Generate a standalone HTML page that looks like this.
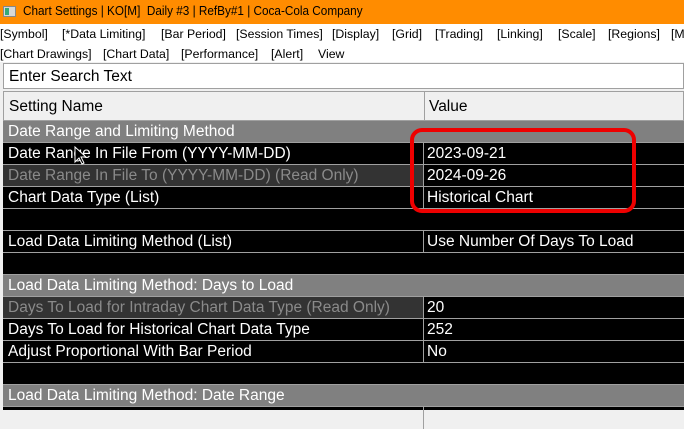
<!DOCTYPE html>
<html><head><meta charset="utf-8"><style>
*{margin:0;padding:0;box-sizing:border-box}
body{width:684px;height:410px;overflow:hidden;background:#f0f0f0;position:relative;font-family:"Liberation Sans",sans-serif}
.t{position:absolute;white-space:nowrap}
#title{position:absolute;left:0;top:0;width:684px;height:24px;background:#ff8c00}
#menu{position:absolute;left:0;top:24px;width:684px;height:38px;background:#fff}
.m{position:absolute;font-size:12.3px;color:#000;white-space:nowrap}
#search{position:absolute;left:3px;top:63px;width:681px;height:26px;background:#fff;border:1px solid #a0a0a0}
.n{font-family:"Liberation Sans",sans-serif;font-size:15.5px}
#hdr{position:absolute;left:3px;top:91px;width:681px;height:30px;background:#f0f0f0;border:1px solid #a0a0a0}
.row{position:absolute;left:3px;width:681px;height:22px;background:#000;border-bottom:1px solid #a0a0a0;color:#fff}
.g{background:#808080;border-bottom:1px solid #a0a0a0}
.row span{position:absolute;top:2px;white-space:nowrap}
.c1{left:5px}.c2{left:424px}
.div{position:absolute;left:420px;top:0;width:1px;height:22px;background:#a0a0a0}
.ro{position:absolute;left:0;top:0;width:420px;height:21px;background:#333}
</style></head><body>
<div id="title">
<div style="position:absolute;left:3px;top:6px;width:13px;height:11px;background:#d8d8d8;border:1px solid #888"><div style="position:absolute;left:1px;top:1px;width:4px;height:7px;background:#3a7"></div></div>
<div class="t" style="left:23px;top:4px;font-size:12.5px;color:#000;transform:scaleX(0.94);transform-origin:left">Chart Settings | KO[M]&nbsp; Daily #3 | RefBy#1 | Coca-Cola Company</div>
</div>
<div id="menu">
<div class="m" style="left:0;top:3px">[Symbol]</div>
<div class="m" style="left:62px;top:3px">[*Data Limiting]</div>
<div class="m" style="left:161px;top:3px">[Bar Period]</div>
<div class="m" style="left:236px;top:3px">[Session Times]</div>
<div class="m" style="left:332px;top:3px">[Display]</div>
<div class="m" style="left:392px;top:3px">[Grid]</div>
<div class="m" style="left:435px;top:3px">[Trading]</div>
<div class="m" style="left:497px;top:3px">[Linking]</div>
<div class="m" style="left:558px;top:3px">[Scale]</div>
<div class="m" style="left:608px;top:3px">[Regions]</div>
<div class="m" style="left:671px;top:3px">[M</div>
<div class="m" style="left:0;top:23px">[Chart Drawings]</div>
<div class="m" style="left:103px;top:23px">[Chart Data]</div>
<div class="m" style="left:181px;top:23px">[Performance]</div>
<div class="m" style="left:271px;top:23px">[Alert]</div>
<div class="m" style="left:318px;top:23px">View</div>
</div>
<div id="search"><span class="t n" style="left:5px;top:4px">Enter Search Text</span></div>
<div id="hdr"><span class="t n" style="left:5px;top:6px">Setting Name</span><div style="position:absolute;left:420px;top:0;width:1px;height:28px;background:#a0a0a0"></div><span class="t n" style="left:425px;top:6px">Value</span></div>

<div class="row g n" style="top:121px"><span class="c1">Date Range and Limiting Method</span></div>
<div class="row n" style="top:143px"><span class="c1">Date Range In File From (YYYY-MM-DD)</span><div class="div"></div><span class="c2">2023-09-21</span></div>
<div class="row n" style="top:165px"><div class="ro"></div><span class="c1" style="color:#8a8a8a">Date Range In File To (YYYY-MM-DD) (Read Only)</span><div class="div"></div><span class="c2">2024-09-26</span></div>
<div class="row n" style="top:187px"><span class="c1">Chart Data Type (List)</span><div class="div"></div><span class="c2">Historical Chart</span></div>
<div class="row n" style="top:209px"></div>
<div class="row n" style="top:231px"><span class="c1">Load Data Limiting Method (List)</span><div class="div"></div><span class="c2">Use Number Of Days To Load</span></div>
<div class="row n" style="top:253px"></div>
<div class="row g n" style="top:275px"><span class="c1">Load Data Limiting Method: Days to Load</span></div>
<div class="row n" style="top:297px"><div class="ro"></div><span class="c1" style="color:#8a8a8a">Days To Load for Intraday Chart Data Type (Read Only)</span><div class="div"></div><span class="c2">20</span></div>
<div class="row n" style="top:319px"><span class="c1">Days To Load for Historical Chart Data Type</span><div class="div"></div><span class="c2">252</span></div>
<div class="row n" style="top:341px"><span class="c1">Adjust Proportional With Bar Period</span><div class="div"></div><span class="c2">No</span></div>
<div class="row n" style="top:363px"></div>
<div class="row g n" style="top:385px"><span class="c1">Load Data Limiting Method: Date Range</span></div>
<div class="row n" style="top:407px;height:3px;border:0"><div class="div"></div></div>

<div style="position:absolute;left:410px;top:128px;width:226px;height:85px;border:4px solid #e00;border-radius:12px"></div>
<svg style="position:absolute;left:74px;top:146px" width="14" height="20" viewBox="0 0 14 20"><path d="M1 1 L1 16 L5 12 L8 18 L10 17 L7 11 L12 11 Z" fill="#000" stroke="#fff" stroke-width="1"/></svg>
</body></html>
